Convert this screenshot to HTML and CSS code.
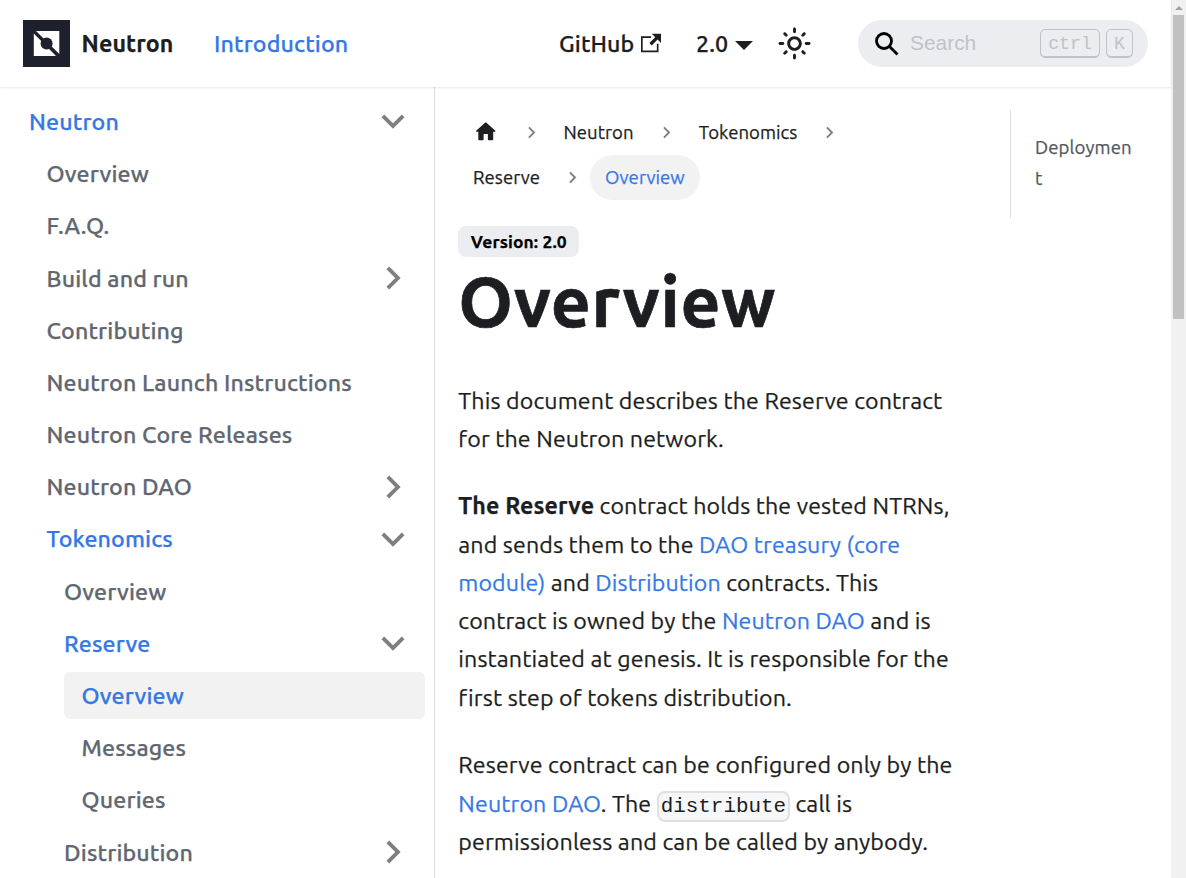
FILE: index.html
```html
<!DOCTYPE html>
<html lang="en">
<head>
<meta charset="utf-8">
<title>Overview | Neutron</title>
<link rel="stylesheet" href="styles.css">
</head>
<body>
<svg class="defs" width="0" height="0">
  <symbol id="chevron" viewBox="0 0 24 24"><path fill="rgba(0,0,0,.5)" d="M7.41 15.41L12 10.83l4.59 4.58L18 14l-6-6-6 6z"/></symbol>
</svg>
<div class="page">
  <div class="site">
    <header class="navbar">
      <a class="brand">
        <svg class="logo" viewBox="0 0 47 47"><rect width="47" height="47" fill="#1f202d"/><path fill="#fff" d="M13 11H36.300V34zM10.800 13.500L33 36H10.800z"/><circle cx="23.600" cy="23.400" r="6" fill="#1f202d"/></svg>
        <b class="brand-name">Neutron</b>
      </a>
      <a class="nav-link active">Introduction</a>
      <div class="nav-right">
        <a class="nav-link github">GitHub<svg class="external" viewBox="0 0 24 24"><path fill="currentColor" d="M21 13v10h-21v-19h12v2h-10v15h17v-8h2zm3-12h-10.988l4.035 4-6.977 7.070 2.828 2.828 6.977-7.070 4.125 4.172v-11z"/></svg></a>
        <a class="nav-link version">2.0<i class="caret"></i></a>
        <svg class="sun" viewBox="0 0 24 24"><path fill="currentColor" d="M12,9c1.650,0,3,1.350,3,3s-1.350,3-3,3s-3-1.350-3-3S10.350,9,12,9 M12,7c-2.760,0-5,2.240-5,5s2.240,5,5,5s5-2.240,5-5 S14.760,7,12,7L12,7z M2,13l2,0c0.550,0,1-0.450,1-1s-0.450-1-1-1l-2,0c-0.550,0-1,0.450-1,1S1.450,13,2,13z M20,13l2,0c0.550,0,1-0.450,1-1 s-0.450-1-1-1l-2,0c-0.550,0-1,0.450-1,1S19.450,13,20,13z M11,2v2c0,0.550,0.450,1,1,1s1-0.450,1-1V2c0-0.550-0.450-1-1-1S11,1.450,11,2z M11,20v2c0,0.550,0.450,1,1,1s1-0.450,1-1v-2c0-0.550-0.450-1-1-1C11.450,19,11,19.450,11,20z M5.990,4.580c-0.390-0.390-1.030-0.390-1.410,0 c-0.390,0.390-0.390,1.030,0,1.410l1.060,1.060c0.390,0.390,1.030,0.390,1.410,0s0.390-1.030,0-1.410L5.990,4.580z M18.360,16.950 c-0.390-0.390-1.030-0.390-1.410,0c-0.390,0.390-0.390,1.030,0,1.410l1.060,1.060c0.390,0.390,1.030,0.390,1.410,0c0.390-0.390,0.390-1.030,0-1.410 L18.360,16.950z M19.420,5.990c0.390-0.390,0.390-1.030,0-1.410c-0.390-0.390-1.030-0.390-1.410,0l-1.060,1.060c-0.390,0.390-0.390,1.030,0,1.410 s1.030,0.390,1.410,0L19.420,5.990z M7.050,18.360c0.390-0.390,0.390-1.030,0-1.410c-0.390-0.390-1.030-0.390-1.410,0l-1.060,1.060 c-0.390,0.390-0.390,1.030,0,1.410s1.030,0.390,1.410,0L7.050,18.360z"/></svg>
        <div class="search">
          <svg class="lens" viewBox="0 0 24 24"><circle cx="9" cy="9" r="7.500"/><path d="M14.500 14.500L22.500 22.500"/></svg>
          <span class="placeholder">Search</span>
          <kbd>ctrl</kbd><kbd>K</kbd>
        </div>
      </div>
    </header>
    <div class="columns">
      <nav class="sidebar">
        <a class="item active">Neutron<svg class="arrow down"><use href="#chevron"/></svg></a>
        <div class="level">
          <a class="item">Overview</a>
          <a class="item">F.A.Q.</a>
          <a class="item">Build and run<svg class="arrow"><use href="#chevron"/></svg></a>
          <a class="item">Contributing</a>
          <a class="item">Neutron Launch Instructions</a>
          <a class="item">Neutron Core Releases</a>
          <a class="item">Neutron DAO<svg class="arrow"><use href="#chevron"/></svg></a>
          <a class="item active">Tokenomics<svg class="arrow down"><use href="#chevron"/></svg></a>
          <div class="level">
            <a class="item">Overview</a>
            <a class="item active">Reserve<svg class="arrow down"><use href="#chevron"/></svg></a>
            <div class="level">
              <a class="item active current">Overview</a>
              <a class="item">Messages</a>
              <a class="item">Queries</a>
            </div>
            <a class="item">Distribution<svg class="arrow"><use href="#chevron"/></svg></a>
          </div>
        </div>
      </nav>
      <main class="doc">
        <div class="crumbs">
          <div class="crumb-row">
            <a class="crumb"><svg class="home" viewBox="0 0 24 24"><path fill="currentColor" d="M10 19v-5h4v5c0 .55.45 1 1 1h3c.55 0 1-.45 1-1v-7h1.700c.46 0 .68-.57.33-.87L12.670 3.600c-.38-.34-.96-.34-1.340 0l-8.360 7.530c-.34.3-.13.87.33.87H5v7c0 .55.45 1 1 1h3c.55 0 1-.45 1-1z"/></svg></a>
            <svg class="sep"><use href="#chevron"/></svg><a class="crumb">Neutron</a>
            <svg class="sep"><use href="#chevron"/></svg><a class="crumb">Tokenomics</a>
            <svg class="sep"><use href="#chevron"/></svg>
          </div>
          <div class="crumb-row">
            <a class="crumb">Reserve</a>
            <svg class="sep"><use href="#chevron"/></svg><a class="crumb here">Overview</a>
          </div>
        </div>
        <span class="badge">Version: 2.0</span>
        <h1>Overview</h1>
        <p>This document describes the Reserve contract<br>for the Neutron network.</p>
        <p><b>The Reserve</b> contract holds the vested NTRNs,<br>and sends them to the <a>DAO treasury (core<br>module)</a> and <a>Distribution</a> contracts. This<br>contract is owned by the <a>Neutron DAO</a> and is<br>instantiated at genesis. It is responsible for the<br>first step of tokens distribution.</p>
        <p>Reserve contract can be configured only by the<br><a>Neutron DAO</a>. The <code>distribute</code> call is<br>permissionless and can be called by anybody.</p>
      </main>
      <aside class="toc"><a>Deployment</a></aside>
    </div>
  </div>
  <div class="scrollbar"><i class="up"></i><i class="thumb"></i></div>
</div>
</body>
</html>
```
FILE: styles.css
```css
* { box-sizing: border-box; }
body {
  margin: 0;
  color: #1c1e21;
  font: 400 23.200px/38.300px Ubuntu, "Noto Sans", sans-serif;
  letter-spacing: .125px;
  -webkit-text-stroke: .25px currentColor;
  overflow: hidden;
}
.defs { display: none; }
.page { display: flex; width: 1186px; height: 878px; overflow: hidden; }
.site { width: 1171px; display: flex; flex-direction: column; }
.navbar {
  height: 87px; flex: none; display: flex; align-items: center;
  padding: 0 23px; box-shadow: 0 1px 2px rgba(0,0,0,.1);
  white-space: nowrap; position: relative;
}
.brand { display: flex; align-items: center; width: 191px; gap: 11.500px; }
.logo { width: 47px; height: 47px; }
.nav-link { font-weight: 500; display: flex; align-items: center; line-height: 37px; margin-bottom: 1px; }
.active, p a, .here { color: #3578e5; }
.nav-right { margin-left: auto; display: flex; align-items: center; width: 589px; }
.github { width: 137px; }
.external { width: 20px; height: 20px; margin-left: 7px; }
.version { width: 81px; }
.caret { border: 9px solid transparent; border-top-color: currentColor; border-bottom: 0; margin: 5px 0 0 7px; }
.sun { width: 35px; height: 35px; }
.search {
  margin-left: auto; width: 290px; height: 47px; border-radius: 24px;
  background: #ebedf0; color: #bec3c9; display: flex; align-items: center;
  padding: 0 15px 0 17px; letter-spacing: 0; -webkit-text-stroke: 0;
  font: 20.900px/24px "Liberation Sans", Arial, sans-serif;
}
.lens { width: 24px; height: 24px; fill: none; stroke: #000; stroke-width: 2.800; }
.placeholder { margin: -2px auto 0 11px; }
kbd {
  height: 29px; padding: 1px 7px 0; margin-left: 6px;
  border: 1px solid #bec3c9; border-radius: 5px; box-shadow: inset 0 -1px 0 #bec3c9;
  font: 18.300px/26px "Liberation Mono", monospace;
}
.columns { display: flex; flex: 1; min-height: 0; }
.sidebar { width: 435px; flex: none; border-right: 1px solid #dadde1; padding: 11.300px 9px 0 11.600px; }
.item {
  display: flex; align-items: center; justify-content: space-between;
  height: 46.400px; margin-bottom: 5.800px; padding: 0 14px 0 17.500px;
  border-radius: 6px; font-weight: 500; white-space: nowrap; line-height: 29px;
}
.item:not(.active) { color: #606770; }
.level { padding-left: 17.500px; }
.current { background: #f2f2f2; }
.arrow { width: 46px; height: 46px; margin-right: -5px; transform: rotate(90deg); }
.arrow.down { transform: rotate(180deg); }
.doc { width: 552px; flex: none; padding: 23.500px 0 0 23.300px; white-space: nowrap; }
.crumbs { font-size: 18.560px; line-height: 31px; margin: -.500px 0 25.500px -.300px; letter-spacing: .05px; }
.crumb-row { display: flex; align-items: center; height: 45px; }
.crumb { padding: 0 15px; display: flex; height: 45px; align-items: center; border-radius: 23px; }
.here { background: #f2f2f2; }
.sep { width: 23px; height: 23px; transform: rotate(90deg); margin: 0 6px; }
.home { width: 25.500px; height: 25.500px; margin-bottom: 2px; }
.badge { display: block; width: 121px; height: 31px; border-radius: 8px; background: #ebedf0; color: #000; font-size: 17.400px; line-height: 31px; font-weight: 700; text-align: center; }
h1 { font-size: 69.600px; line-height: 87px; margin: 1px 0 36px; font-weight: 700; letter-spacing: .600px; -webkit-text-stroke-width: .7px; }
p { margin: 0 0 29.200px; }
code { font: 20.900px/26px "Liberation Mono", monospace; letter-spacing: 0; -webkit-text-stroke: 0; background: #f6f7f8; border: 2px solid #dfe0e1; border-radius: 8px; padding: 2px; }
.toc { margin: 23px 0 0 23px; width: 138px; height: 108px; border-left: 1px solid #dadde1; padding: 22px 16px 0 24px; font-size: 18.560px; line-height: 31px; color: #525860; overflow-wrap: anywhere; }
.scrollbar { width: 15px; background: #f1f1f1; display: flex; flex-direction: column; align-items: center; }
.up { border: 4px solid transparent; border-top: 0; border-bottom-color: #a3a3a3; margin: 6px 0 5px; }
.thumb { width: 11px; height: 304px; background: #c1c1c1; }
```
